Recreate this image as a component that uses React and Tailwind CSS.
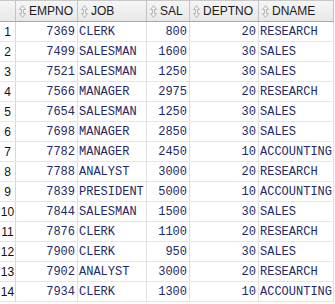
import React from 'react';

const rows = [
  [7369, 'CLERK', 800, 20, 'RESEARCH'],
  [7499, 'SALESMAN', 1600, 30, 'SALES'],
  [7521, 'SALESMAN', 1250, 30, 'SALES'],
  [7566, 'MANAGER', 2975, 20, 'RESEARCH'],
  [7654, 'SALESMAN', 1250, 30, 'SALES'],
  [7698, 'MANAGER', 2850, 30, 'SALES'],
  [7782, 'MANAGER', 2450, 10, 'ACCOUNTING'],
  [7788, 'ANALYST', 3000, 20, 'RESEARCH'],
  [7839, 'PRESIDENT', 5000, 10, 'ACCOUNTING'],
  [7844, 'SALESMAN', 1500, 30, 'SALES'],
  [7876, 'CLERK', 1100, 20, 'RESEARCH'],
  [7900, 'CLERK', 950, 30, 'SALES'],
  [7902, 'ANALYST', 3000, 20, 'RESEARCH'],
  [7934, 'CLERK', 1300, 10, 'ACCOUNTING'],
];

const cols = [
  { name: 'EMPNO', right: true },
  { name: 'JOB' },
  { name: 'SAL', right: true },
  { name: 'DEPTNO', right: true },
  { name: 'DNAME' },
];

const grid = 'grid grid-cols-[16px_62px_69px_43px_69px_75px]';

const SortIcon = () => (
  <svg width="7" height="13" viewBox="0 0 7 13" className="shrink-0">
    <path d="M3.5 0.5 L6.5 4.5 L4.5 4.5 L4.5 8.5 L6.5 8.5 L3.5 12.5 L0.5 8.5 L2.5 8.5 L2.5 4.5 L0.5 4.5 Z" fill="#f4f4f4" stroke="#b4b4b4" strokeWidth="1" strokeLinejoin="round" />
  </svg>
);

export default function App() {
  return (
    <div className="w-[335px] h-[304px] bg-white overflow-hidden">
      <div className="w-[334px]">
        <div className={`${grid} h-[22px] bg-gradient-to-b from-[#f6f6f6] to-[#e8e8e8] border-t border-[#c8c8c8] border-b border-b-[#a8a8a8]`}>
          <div className="border-r border-[#c4c4c4]" />
          {cols.map((c) => (
            <div
              key={c.name}
              className="flex items-center gap-[3px] pl-[3px] border-r border-[#c4c4c4] text-[12px] text-[#1a1a1a] font-['Liberation_Sans',Arial,sans-serif]"
            >
              <SortIcon />
              <span>{c.name}</span>
            </div>
          ))}
        </div>
        {rows.map((r, i) => (
          <div key={i} className={`${grid} h-[20px] border-b border-[#e6e6e6]`}>
            <div className="flex items-center justify-center border-r border-[#d8d8d8] text-[12px] text-[#111] font-['Liberation_Sans',Arial,sans-serif]">
              {i + 1}
            </div>
            {r.map((v, j) => (
              <div
                key={j}
                className={`flex items-center border-r border-[#e0e0e0] text-[12px] text-[#1f2a66] font-['Liberation_Mono','Courier_New',monospace] ${cols[j].right ? 'justify-end pr-[2px]' : 'pl-[1px]'}`}
              >
                {v}
              </div>
            ))}
          </div>
        ))}
      </div>
    </div>
  );
}
